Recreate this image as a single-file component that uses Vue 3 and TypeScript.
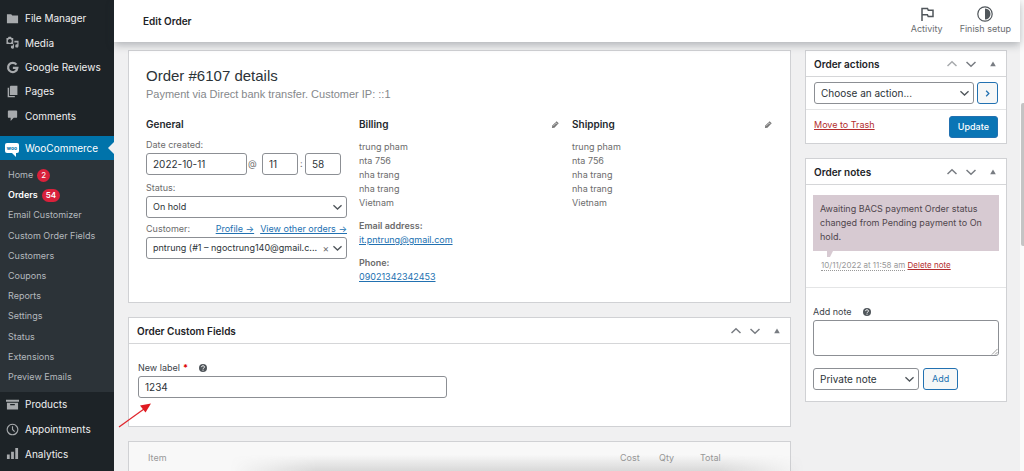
<script setup lang="ts">
import { ref } from 'vue'

interface MenuItem { label: string; icon: string }
interface SubItem { label: string; count?: number; current?: boolean }

const topMenu: MenuItem[] = [
  { label: 'File Manager', icon: 'folder' },
  { label: 'Media', icon: 'media' },
  { label: 'Google Reviews', icon: 'google' },
  { label: 'Pages', icon: 'pages' },
  { label: 'Comments', icon: 'comment' },
]
const subMenu: SubItem[] = [
  { label: 'Home', count: 2 },
  { label: 'Orders', count: 54, current: true },
  { label: 'Email Customizer' },
  { label: 'Custom Order Fields' },
  { label: 'Customers' },
  { label: 'Coupons' },
  { label: 'Reports' },
  { label: 'Settings' },
  { label: 'Status' },
  { label: 'Extensions' },
  { label: 'Preview Emails' },
]
const bottomMenu: MenuItem[] = [
  { label: 'Products', icon: 'products' },
  { label: 'Appointments', icon: 'clock' },
  { label: 'Analytics', icon: 'bars' },
]
const address: string[] = ['trung pham', 'nta 756', 'nha trang', 'nha trang', 'Vietnam']

const orderDate = ref('2022-10-11')
const orderHour = ref('11')
const orderMinute = ref('58')
const newLabel = ref('1234')
const note = ref('')
</script>

<template>
  <div class="admin">
    <svg class="defs" aria-hidden="true">
      <symbol id="folder" viewBox="0 0 14 14"><path d="M1 2.5h4.6l1.2 1.4H13v8.3H1z" /></symbol>
      <symbol id="media" viewBox="0 0 14 14">
        <path fill-rule="evenodd" d="M.5 2.2h1.6l.7-1.3h2.600l.7 1.300h1.700v6.300H.5zM4.100 3.200a2.100 2.100 0 1 0 .01 0z" />
        <path d="M9 5.200H13.500v5.600a1.800 1.800 0 1 1-1.300-1.800V7H9zM7.400 9h1.200v3a1.700 1.700 0 1 1-1.200-1.600z" />
      </symbol>
      <symbol id="google" viewBox="0 0 14 14"><path d="M11.200 3.900A5 5 0 1 0 12.200 7.400H7.400" fill="none" stroke="currentColor" stroke-width="2.500" /></symbol>
      <symbol id="pages" viewBox="0 0 14 14"><path d="M5 .8h7.300v10H4.200V1.600zM1.800 3h1.500v8.800h6.200v1.400H1.800z" /></symbol>
      <symbol id="comment" viewBox="0 0 14 14"><path d="M3 1.500h8a1 1 0 0 1 1 1v6a1 1 0 0 1-1 1H8.300L5 13V9.500H3a1 1 0 0 1-1-1v-6a1 1 0 0 1 1-1z" /></symbol>
      <symbol id="products" viewBox="0 0 14 14"><path fill-rule="evenodd" d="M0 2h14v2H0zM1 5h12v7.500H1zM4.500 6.500v1.200h5V6.500z" /></symbol>
      <symbol id="clock" viewBox="0 0 14 14"><path d="M7 1.300a5.700 5.700 0 1 0 .01 0zM7 3.500V7l2.300 2.300" fill="none" stroke="currentColor" stroke-width="1.200" /></symbol>
      <symbol id="bars" viewBox="0 0 14 14"><path d="M1 8h3v5H1zM5.500 5h3v8h-3zM10 1h3v12h-3z" /></symbol>
      <symbol id="up" viewBox="0 0 10 10"><path d="M.5 7L5 2.800 9.500 7" fill="none" stroke="currentColor" stroke-width="1.500" /></symbol>
      <symbol id="down" viewBox="0 0 10 10"><path d="M.5 3L5 7.200 9.500 3" fill="none" stroke="currentColor" stroke-width="1.500" /></symbol>
      <symbol id="toggle" viewBox="0 0 10 10"><path d="M5 2.500L7.800 7.300H2.200z" /></symbol>
      <symbol id="help" viewBox="0 0 10 10">
        <circle cx="5" cy="5" r="4" />
        <path d="M3.600 4.100a1.400 1.300 0 1 1 2 1.100Q5 5.500 5 6.100M5 6.700v1" fill="none" stroke="#fff" stroke-width="1" />
      </symbol>
      <symbol id="pencil" viewBox="0 0 10 10">
        <path d="M6.200 1.300L8.600 3.700 3.800 8.500 1 9l.5-2.800z" />
        <path d="M5.200 2.700l2 2M2.600 6.600l3.200-3.200" stroke="#fff" stroke-width=".6" fill="none" />
      </symbol>
    </svg>

    <nav class="sidebar" aria-label="Main menu">
      <ul class="menu top">
        <li v-for="m in topMenu" :key="m.label">
          <a href="#"><svg class="micon"><use :href="'#' + m.icon" /></svg>{{ m.label }}</a>
        </li>
      </ul>
      <a class="active" href="#">
        <span class="woo">woo</span>WooCommerce
      </a>
      <ul class="submenu">
        <li v-for="s in subMenu" :key="s.label">
          <a href="#" :class="{ current: s.current }">{{ s.label }}<span v-if="s.count" class="count">{{ s.count }}</span></a>
        </li>
      </ul>
      <ul class="menu bottom">
        <li v-for="m in bottomMenu" :key="m.label">
          <a href="#"><svg class="micon"><use :href="'#' + m.icon" /></svg>{{ m.label }}</a>
        </li>
      </ul>
    </nav>

    <div class="page">
      <header class="topbar">
        <h1>Edit Order</h1>
        <div class="tools">
          <button type="button">
            <svg viewBox="0 0 16 16"><path d="M3 15V2.500h5.500l.8 1.700H14v6.300H9.200L8.400 8.800H3" fill="none" stroke="currentColor" stroke-width="1.500" /></svg>
            Activity
          </button>
          <button type="button">
            <svg viewBox="0 0 16 16"><circle cx="8" cy="8" r="7.200" fill="none" stroke="currentColor" stroke-width="1.200" /><path d="M8 2.500a5.500 5.500 0 0 1 0 11z" /></svg>
            Finish setup
          </button>
        </div>
      </header>

      <div class="columns">
        <main class="primary">
          <section class="card order">
            <h2>Order #6107 details</h2>
            <p class="meta">Payment via Direct bank transfer. Customer IP: ::1</p>
            <div class="details">
              <div class="general">
                <h3>General</h3>
                <label for="date">Date created:</label>
                <div class="dates">
                  <input id="date" v-model="orderDate" class="date" type="text"><span>@</span>
                  <input v-model="orderHour" class="time" type="text" aria-label="Hour"><span class="colon">:</span>
                  <input v-model="orderMinute" class="time" type="text" aria-label="Minute">
                </div>
                <label for="status" class="status-label">Status:</label>
                <div class="select">
                  <select id="status"><option>On hold</option></select>
                  <svg><use href="#down" /></svg>
                </div>
                <div class="customer-row">
                  <label for="customer">Customer:</label>
                  <span><a href="#">Profile →</a><a href="#">View other orders →</a></span>
                </div>
                <div class="select customer">
                  <select id="customer"><option>pntrung (#1 – ngoctrung140@gmail.c...</option></select>
                  <button type="button" aria-label="Clear customer">×</button>
                  <svg><use href="#down" /></svg>
                </div>
              </div>
              <div class="address">
                <h3>Billing <button type="button" aria-label="Edit billing"><svg><use href="#pencil" /></svg></button></h3>
                <p><template v-for="(line, i) in address" :key="i">{{ line }}<br></template></p>
                <p><strong>Email address:</strong><br><a href="#">it.pntrung@gmail.com</a></p>
                <p><strong>Phone:</strong><br><a href="#">09021342342453</a></p>
              </div>
              <div class="address">
                <h3>Shipping <button type="button" aria-label="Edit shipping"><svg><use href="#pencil" /></svg></button></h3>
                <p><template v-for="(line, i) in address" :key="i">{{ line }}<br></template></p>
              </div>
            </div>
          </section>

          <section class="card">
            <header class="head">
              <h2>Order Custom Fields</h2>
              <div class="handles">
                <button type="button" aria-label="Move up"><svg><use href="#up" /></svg></button>
                <button type="button" aria-label="Move down"><svg><use href="#down" /></svg></button>
                <button type="button" aria-label="Toggle panel"><svg><use href="#toggle" /></svg></button>
              </div>
            </header>
            <div class="custom">
              <label for="newlabel">New label <b>*</b><svg class="help"><use href="#help" /></svg></label>
              <input id="newlabel" v-model="newLabel" type="text">
              <svg class="arrow" viewBox="0 0 34 26"><path d="M1 25L26 7" stroke="#e0262d" stroke-width="1.300" /><path d="M33 1.500L27.500 10.500L22 3.500z" fill="#e01b22" /></svg>
            </div>
          </section>

          <section class="card items">
            <table>
              <thead><tr><th class="item">Item</th><th class="cost">Cost</th><th class="qty">Qty</th><th class="total">Total</th><td></td></tr></thead>
            </table>
          </section>
        </main>

        <aside class="secondary">
          <section class="card">
            <header class="head">
              <h2>Order actions</h2>
              <div class="handles">
                <button type="button" class="muted" aria-label="Move up"><svg><use href="#up" /></svg></button>
                <button type="button" aria-label="Move down"><svg><use href="#down" /></svg></button>
                <button type="button" aria-label="Toggle panel"><svg><use href="#toggle" /></svg></button>
              </div>
            </header>
            <div class="choose">
              <div class="select">
                <select aria-label="Choose an action"><option>Choose an action...</option></select>
                <svg><use href="#down" /></svg>
              </div>
              <button type="button" class="btn go" aria-label="Apply"><svg viewBox="0 0 10 10"><path d="M3.500 2l3 3-3 3" fill="none" stroke="currentColor" stroke-width="1.400" /></svg></button>
            </div>
            <div class="submit">
              <a href="#" class="danger">Move to Trash</a>
              <button type="button" class="btn primary-btn">Update</button>
            </div>
          </section>

          <section class="card">
            <header class="head">
              <h2>Order notes</h2>
              <div class="handles">
                <button type="button" aria-label="Move up"><svg><use href="#up" /></svg></button>
                <button type="button" aria-label="Move down"><svg><use href="#down" /></svg></button>
                <button type="button" aria-label="Toggle panel"><svg><use href="#toggle" /></svg></button>
              </div>
            </header>
            <div class="notes">
              <div class="bubble">Awaiting BACS payment Order status changed from Pending payment to On hold.</div>
              <p><span>10/11/2022 at 11:58 am</span> <a href="#" class="danger">Delete note</a></p>
            </div>
            <div class="add-note">
              <label for="note">Add note<svg class="help"><use href="#help" /></svg></label>
              <div class="area">
                <textarea id="note" v-model="note"></textarea>
                <svg viewBox="0 0 8 8"><path d="M1 7.500L7.500 1M4.500 7.500l3-3" stroke="#777" stroke-width=".8" /></svg>
              </div>
              <div class="add-row">
                <div class="select">
                  <select aria-label="Note type"><option>Private note</option></select>
                  <svg><use href="#down" /></svg>
                </div>
                <button type="button" class="btn">Add</button>
              </div>
            </div>
          </section>
        </aside>
      </div>
    </div>
    <div class="scrollbar" aria-hidden="true"><i></i></div>
    <div class="shade" aria-hidden="true"></div>
  </div>
</template>

<style>
body { margin: 0; background: #f0f0f1; overflow: hidden; }
</style>

<style scoped>
* { box-sizing: border-box; }
.admin { display: flex; min-height: 100vh; font: 9px/14px Inter, "Liberation Sans", sans-serif; color: #3c434a; background: #f0f0f1; }
.defs { position: absolute; width: 0; height: 0; }
svg { fill: currentColor; display: block; }
h1, h2, h3, p, ul { margin: 0; padding: 0; }
ul { list-style: none; }
a { color: #2271b1; }
button { font: inherit; color: inherit; background: none; border: 0; padding: 0; margin: 0; }
input, select, textarea { font: inherit; color: #2c3338; background: #fff; border: 1px solid #8c8f94; border-radius: 3px; margin: 0; outline: 0; }
input { height: 22px; padding: 0 6px; font-size: 10px; }

.sidebar { flex: 0 0 114px; background: #1d2327; display: flex; flex-direction: column; }
.sidebar a { color: #f0f0f1; text-decoration: none; display: flex; align-items: center; white-space: nowrap; }
.menu { display: flex; flex-direction: column; font-size: 10px; }
.menu li, .submenu li { flex: 1; display: flex; }
.menu a { padding-left: 6px; gap: 6px; }
.top { height: 122px; margin-top: 6px; }
.bottom { height: 74px; }
.micon { width: 13px; height: 13px; color: #a7aaad; }
.sidebar .active { position: relative; height: 24px; margin-top: 8px; padding-left: 5px; gap: 6px; font-size: 10px; background: #0073aa; color: #fff; }
.active::after { content: ""; position: absolute; right: 0; top: 6px; border: 6px solid transparent; border-right-color: #f0f0f1; border-left: 0; }
.woo { position: relative; width: 14px; height: 10px; border-radius: 2px; background: #fff; color: #0073aa; font-size: 5px; line-height: 10px; font-weight: 700; text-align: center; }
.woo::after { content: ""; position: absolute; left: 7px; top: 10px; border: 2px solid transparent; border-top-color: #fff; border-right-color: #fff; }
.submenu { height: 232px; padding: 5px 0 5px 8px; background: #2c3338; display: flex; flex-direction: column; }
.submenu a { color: #b4b9be; }
.submenu .current { color: #fff; font-weight: 600; }
.count { height: 13px; min-width: 13px; margin-left: 4px; padding: 0 4px; border-radius: 7px; background: #d9213b; color: #fff; font-size: 8px; line-height: 13px; text-align: center; }

.page { flex: 1; min-width: 0; }
.topbar { position: relative; height: 42px; padding: 0 9px 0 29px; display: flex; align-items: center; justify-content: space-between; background: #fff; box-shadow: 0 3px 8px rgba(40, 50, 60, .32); }
.topbar h1 { font-size: 10px; font-weight: 600; color: #1d2327; }
.tools { display: flex; gap: 17px; color: #6a6d70; }
.tools button { display: flex; flex-direction: column; align-items: center; }
.tools svg { width: 16px; height: 16px; color: #50565b; }

.columns { display: flex; gap: 14px; padding: 8px 13px 0 14px; }
.primary { flex: 1; min-width: 0; display: flex; flex-direction: column; gap: 14px; }
.secondary { flex: 0 0 202px; display: flex; flex-direction: column; gap: 14px; align-self: flex-start; }
.card { background: #fff; border: 1px solid #d0d1d4; }
.order { height: 253px; padding: 16px 17px; }
.order h2 { font: 15px/18px "Liberation Sans", sans-serif; color: #2c3338; }
.order .meta { font: 11px/18px "Liberation Sans", sans-serif; color: #85888b; }
.details { display: grid; grid-template-columns: repeat(3, minmax(0, 1fr)); gap: 12px; margin-top: 14px; color: #6c6c6c; }
h3 { display: flex; justify-content: space-between; font-size: 10px; line-height: 14px; font-weight: 600; color: #23282d; }
h3 svg { width: 9px; height: 9px; color: #777; }
.general label { display: block; }
.general > h3 + label { margin-top: 7px; }
.dates { display: flex; align-items: center; margin: 1px 0 6px; }
.dates .date { width: 101px; }
.dates .time { width: 36px; }
.dates span { width: 15px; padding-left: 1px; }
.dates .colon { width: 7px; padding-left: 2px; }
.general .status-label { margin-bottom: 1px; }
.customer-row { display: flex; justify-content: space-between; margin: 4px 0 1px; white-space: nowrap; }
.customer-row span { display: flex; gap: 6px; }
.select { position: relative; }
.select select { display: block; appearance: none; width: 100%; height: 22px; padding: 0 20px 0 6px; text-overflow: ellipsis; }
.select svg { position: absolute; right: 5px; top: 6px; width: 9px; height: 10px; color: #50565b; pointer-events: none; }
.customer button { position: absolute; right: 18px; top: 4px; font-size: 10px; }
.address p { margin-top: 9px; }
.address strong { font-weight: 600; }

.head { display: flex; align-items: center; justify-content: space-between; height: 26px; padding: 0 8px; border-bottom: 1px solid #d5d6d8; }
.head h2 { font-size: 10px; font-weight: 600; color: #1d2327; }
.handles { display: flex; gap: 9px; color: #787c82; }
.handles svg { width: 10px; height: 10px; }
.handles button:last-child { margin-left: 3px; }
.handles .muted { color: #a7aaad; }
.custom { position: relative; height: 82px; padding: 16px 9px; }
.custom label, .add-note label { display: flex; align-items: center; height: 16px; }
.custom label b { color: #d00; margin-left: 3px; }
.help { width: 10px; height: 10px; margin-left: 10px; color: #50565b; }
.custom input { display: block; width: 48%; }
.arrow { position: absolute; left: -11px; top: 58px; width: 34px; height: 26px; }

.items { height: 31px; border-bottom: 0; background: #f8f8f8; }
table { width: 100%; border-collapse: collapse; table-layout: fixed; }
th { height: 32px; padding: 0; font-weight: 400; color: #999; text-align: left; }
.item { padding-left: 19px; }
.cost { width: 39px; }
.qty { width: 41px; }
.total { width: 40px; }
td { width: 50px; padding: 0; }

.choose { display: flex; gap: 3px; padding: 5px 8px; border-bottom: 1px solid #e4e5e6; }
.choose .select { flex: 1; }
.choose select, .add-row select { font-size: 10px; }
.btn { height: 22px; padding: 0 8px; border: 1px solid #2271b1; border-radius: 3px; background: #f6f7f7; color: #2271b1; }
.go { width: 21px; padding: 0 5px; }
.primary-btn { background: #0a75b5; color: #fff; font-weight: 500; }
.submit { display: flex; align-items: center; justify-content: space-between; height: 33px; padding: 0 8px; }
.submit .danger { margin-bottom: 4px; }
.danger { color: #b32d2e; }
.notes { padding: 10px 7px; height: 103px; border-bottom: 1px solid #e4e5e6; }
.bubble { position: relative; padding: 7px; background: #d7cad2; color: #50464d; }
.bubble::after { content: ""; position: absolute; left: 14px; top: 100%; border: 3px solid transparent; border-top: 6px solid #d7cad2; border-left-color: #d7cad2; border-bottom: 0; }
.notes p { margin: 7px 0 0 8px; font-size: 8px; white-space: nowrap; color: #999; }
.notes p span { border-bottom: 1px dotted #999; }
.add-note { padding: 16px 7px 11px; }
.area { position: relative; }
textarea { display: block; width: 100%; height: 36px; resize: none; }
.area svg { position: absolute; right: 1px; bottom: 1px; width: 7px; height: 7px; }
.add-row { display: flex; gap: 4px; margin-top: 12px; }
.add-row .select { flex: 0 0 106px; }

.scrollbar { flex: 0 0 4px; background: #fafafa; }
.scrollbar i { display: block; height: 143px; margin: 103px 0 0 1px; background: #c4c4c4; border-radius: 2px 0 0 2px; }
.shade { position: fixed; left: 230px; right: 220px; bottom: 0; height: 16px; background: linear-gradient(to bottom, transparent, rgba(90, 90, 90, .2)); mask-image: linear-gradient(to right, transparent, #000 15%, #000 85%, transparent); pointer-events: none; }
</style>
